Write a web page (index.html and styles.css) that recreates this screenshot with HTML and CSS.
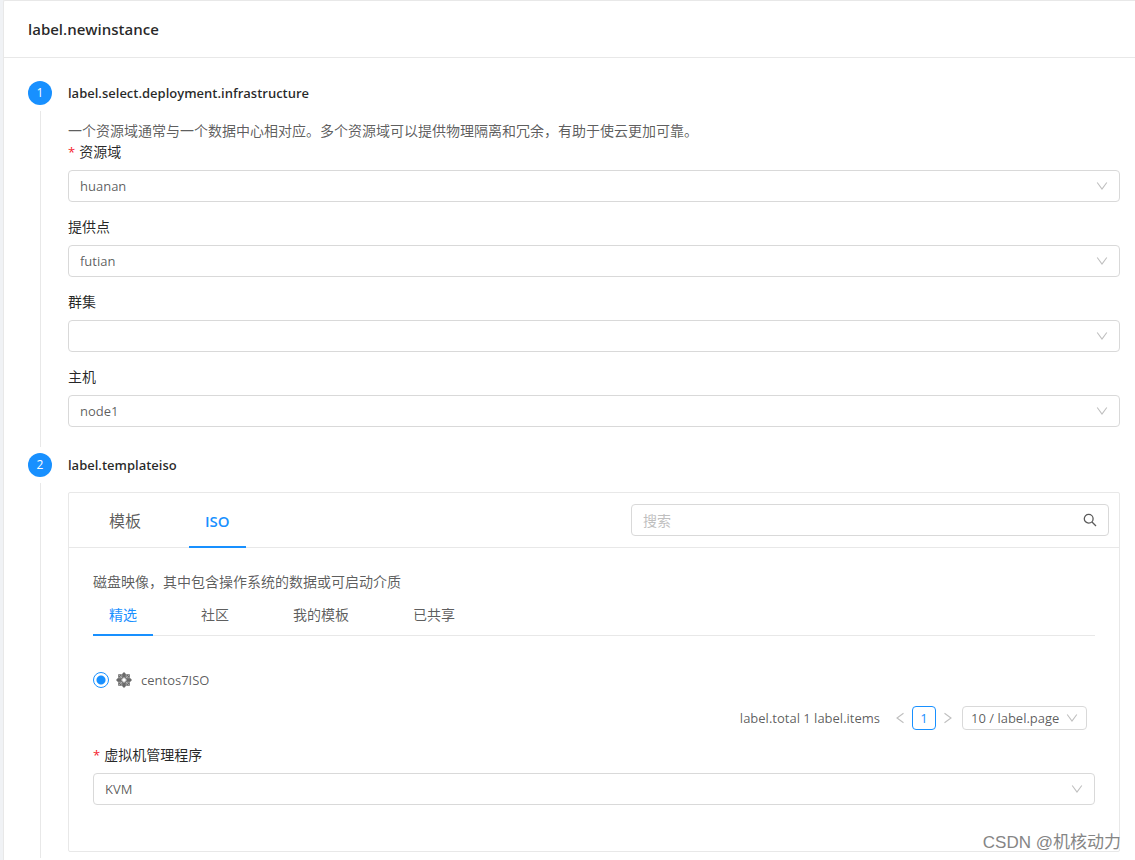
FILE: index.html
```html
<!DOCTYPE html>
<html lang="zh-CN">
<head>
<meta charset="utf-8">
<meta name="viewport" content="width=device-width, initial-scale=1">
<title>label.newinstance</title>
<link rel="stylesheet" href="styles.css">
</head>
<body>
<svg class="sprite" aria-hidden="true">
  <symbol id="chevron" viewBox="0 0 12 12"><path d="M1.200 2.500 6 9l4.800-6.500" fill="none" stroke="currentColor" stroke-width="1.100"/></symbol>
</svg>
<main class="card">
  <header class="card-header"><h1>label.newinstance</h1></header>
  <form class="steps">
    <section class="step">
      <div class="rail"><span class="step-number">1</span><span class="tail"></span></div>
      <div class="step-main">
        <h2>label.select.deployment.infrastructure</h2>
        <div class="step-body">
          <p class="description">一个资源域通常与一个数据中心相对应。多个资源域可以提供物理隔离和冗余，有助于使云更加可靠。</p>
          <div class="fields">
            <div class="field">
              <label class="required" for="zone">资源域</label>
              <div class="select"><select id="zone"><option>huanan</option></select><svg><use href="#chevron"/></svg></div>
            </div>
            <div class="field">
              <label for="pod">提供点</label>
              <div class="select"><select id="pod"><option>futian</option></select><svg><use href="#chevron"/></svg></div>
            </div>
            <div class="field">
              <label for="cluster">群集</label>
              <div class="select"><select id="cluster"><option></option></select><svg><use href="#chevron"/></svg></div>
            </div>
            <div class="field">
              <label for="host">主机</label>
              <div class="select"><select id="host"><option>node1</option></select><svg><use href="#chevron"/></svg></div>
            </div>
          </div>
        </div>
      </div>
    </section>
    <section class="step step-last">
      <div class="rail"><span class="step-number">2</span><span class="tail"></span></div>
      <div class="step-main">
        <h2>label.templateiso</h2>
        <div class="panel">
          <div class="panel-head">
            <div class="tabs tabs-large" role="tablist">
              <button type="button" role="tab">模板</button>
              <button type="button" role="tab" class="active" aria-selected="true">ISO</button>
            </div>
            <div class="search">
              <input type="text" placeholder="搜索" aria-label="搜索">
              <button type="button" aria-label="搜索"><svg viewBox="0 0 14 14"><circle cx="5.700" cy="5.700" r="4.400"/><path d="m9 9 4 4"/></svg></button>
            </div>
          </div>
          <div class="panel-body">
            <p class="description">磁盘映像，其中包含操作系统的数据或可启动介质</p>
            <div class="tabs tabs-small" role="tablist">
              <button type="button" role="tab" class="active" aria-selected="true">精选</button>
              <button type="button" role="tab">社区</button>
              <button type="button" role="tab">我的模板</button>
              <button type="button" role="tab">已共享</button>
            </div>
            <label class="image-row">
              <input type="radio" name="iso" checked>
              <svg class="centos" viewBox="0 0 16 16">
                <path fill="#6a6a6a" d="M8 0l2.200 2.200H13.800V5.800L16 8l-2.200 2.200v3.600h-3.600L8 16l-2.200-2.200H2.200v-3.600L0 8l2.200-2.200V2.200h3.600z"/>
                <path fill="none" stroke="#bdbdbd" stroke-width=".7" d="M5.800 2.200v3.600H2.200M10.200 2.200v3.600h3.600M2.200 10.200h3.600v3.600M13.800 10.200h-3.600v3.600M3 3l10 10M13 3 3 13"/>
                <path fill="#fff" d="M8 4.800 9 7l2.200 1L9 9l-1 2.200L7 9 4.800 8 7 7z"/>
              </svg>
              <span>centos7ISO</span>
            </label>
            <nav class="pagination" aria-label="pagination">
              <span class="total">label.total 1 label.items</span>
              <button type="button" class="arrow" aria-label="previous"><svg class="prev"><use href="#chevron"/></svg></button>
              <button type="button" class="page" aria-current="page">1</button>
              <button type="button" class="arrow" aria-label="next"><svg class="next"><use href="#chevron"/></svg></button>
              <div class="select select-small"><select aria-label="label.page"><option>10 / label.page</option></select><svg><use href="#chevron"/></svg></div>
            </nav>
            <div class="field">
              <label class="required" for="hypervisor">虚拟机管理程序</label>
              <div class="select"><select id="hypervisor"><option>KVM</option></select><svg><use href="#chevron"/></svg></div>
            </div>
          </div>
        </div>
      </div>
    </section>
  </form>
</main>
<div class="watermark">CSDN @机核动力</div>
</body>
</html>
```
FILE: styles.css
```css
* { box-sizing: border-box; }
body {
  margin: 0;
  position: relative;
  background: #f0f2f5;
  color: rgba(0, 0, 0, .65);
  font: 14px/20px "Open Sans", "Noto Sans CJK SC", sans-serif;
}
h1, h2, p { margin: 0; }
button, input, select { margin: 0; font: inherit; color: inherit; }
button { padding: 0; border: 0; background: none; cursor: pointer; }
.sprite { display: none; }

.card {
  margin-left: 3px;
  background: #fff;
  border: solid #e8e8e8;
  border-width: 1px 0 0 1px;
  border-radius: 2px 0 0 0;
}
.card-header { padding: 16px 24px; border-bottom: 1px solid #e8e8e8; }
h1 { font-size: 15px; line-height: 24px; font-weight: 600; color: rgba(0, 0, 0, .85); }

.steps { padding: 23px 15px 0 24px; }
.step { display: flex; gap: 16px; }
.rail { display: flex; flex-direction: column; align-items: center; gap: 6px; padding-bottom: 6px; }
.step-number {
  width: 24px;
  height: 24px;
  border-radius: 50%;
  background: #1890ff;
  color: #fff;
  font-size: 12px;
  line-height: 24px;
  text-align: center;
}
.tail { flex: 1; width: 1px; background: #e8e8e8; }
.step-main { flex: 1; min-width: 0; padding-bottom: 26px; }
.step-last .step-main { padding-bottom: 8px; }
.step-last .rail { padding-bottom: 2px; }
h2 { font-size: 13px; line-height: 24px; font-weight: 600; color: rgba(0, 0, 0, .85); }
.step-body { padding-top: 15px; }
.description { line-height: 22px; }

.fields { display: grid; gap: 15px; }
.field { display: grid; gap: 8px; }
.field label { color: rgba(0, 0, 0, .85); }
.required::before { content: "*"; margin-right: 4px; color: #f5222d; font-size: 13px; }

.select { position: relative; font-size: 13px; }
.select select {
  appearance: none;
  display: block;
  width: 100%;
  height: 32px;
  padding: 0 32px 0 11px;
  border: 1px solid #d9d9d9;
  border-radius: 4px;
  background: #fff;
}
.select svg {
  position: absolute;
  top: 50%;
  right: 12px;
  width: 12px;
  height: 12px;
  margin-top: -6px;
  color: #bfbfbf;
  pointer-events: none;
}

.panel { margin-top: 15px; border: 1px solid #e8e8e8; border-radius: 2px; }
.panel-head {
  display: flex;
  align-items: center;
  justify-content: space-between;
  padding: 0 10px 0 24px;
  border-bottom: 1px solid #e8e8e8;
}
.tabs { display: flex; gap: 32px; }
.tabs button { padding: 0 16px; margin-bottom: -1px; border-bottom: 2px solid transparent; white-space: nowrap; }
.tabs .active { color: #1890ff; border-color: #1890ff; }
.tabs-large button { height: 55px; font-size: 16px; padding-top: 3px; }
.tabs-large .active { font-size: 15px; font-weight: 600; }
.tabs-small { border-bottom: 1px solid #e8e8e8; }
.tabs-small button { height: 43px; padding-top: 2px; }

.search { position: relative; flex: 0 1 478px; }
.search input {
  display: block;
  width: 100%;
  height: 32px;
  padding: 0 32px 0 11px;
  border: 1px solid #d9d9d9;
  border-radius: 4px;
}
.search input::placeholder { color: #bfbfbf; }
.search button { position: absolute; top: 0; right: 0; width: 38px; height: 32px; display: grid; place-items: center; }
.search svg { width: 14px; height: 14px; fill: none; stroke: #595959; stroke-width: 1.3; }

.panel-body { padding: 23px 24px 46px; }
.image-row { display: flex; align-items: center; gap: 7px; margin-top: 32px; line-height: 24px; font-size: 13px; }
.image-row input {
  appearance: none;
  width: 16px;
  height: 16px;
  margin: 0;
  border: 1px solid #1890ff;
  border-radius: 50%;
  background: radial-gradient(circle, #1890ff 4px, #fff 5px);
}
.centos { width: 16px; height: 16px; margin-right: 2px; }

.pagination {
  display: flex;
  align-items: center;
  justify-content: flex-end;
  margin: 14px 8px 15px 0;
  font-size: 13px;
}
.total { margin-right: 8px; }
.arrow { width: 24px; height: 24px; display: grid; place-items: center; color: #bfbfbf; }
.arrow svg { width: 12px; height: 12px; }
.prev { transform: rotate(90deg); }
.next { transform: rotate(-90deg); }
.page { width: 24px; height: 24px; border: 1px solid #1890ff; border-radius: 4px; color: #1890ff; }
.select-small { margin-left: 2px; }
.select-small select { width: 125px; height: 24px; padding: 0 20px 0 8px; }
.select-small svg { right: 9px; }

.watermark {
  position: absolute;
  right: 14px;
  bottom: 5px;
  color: #858585;
  font: 17px/24px "Liberation Sans", "Noto Sans CJK SC", sans-serif;
  text-shadow: 1px 1px 0 #fff;
}
```
